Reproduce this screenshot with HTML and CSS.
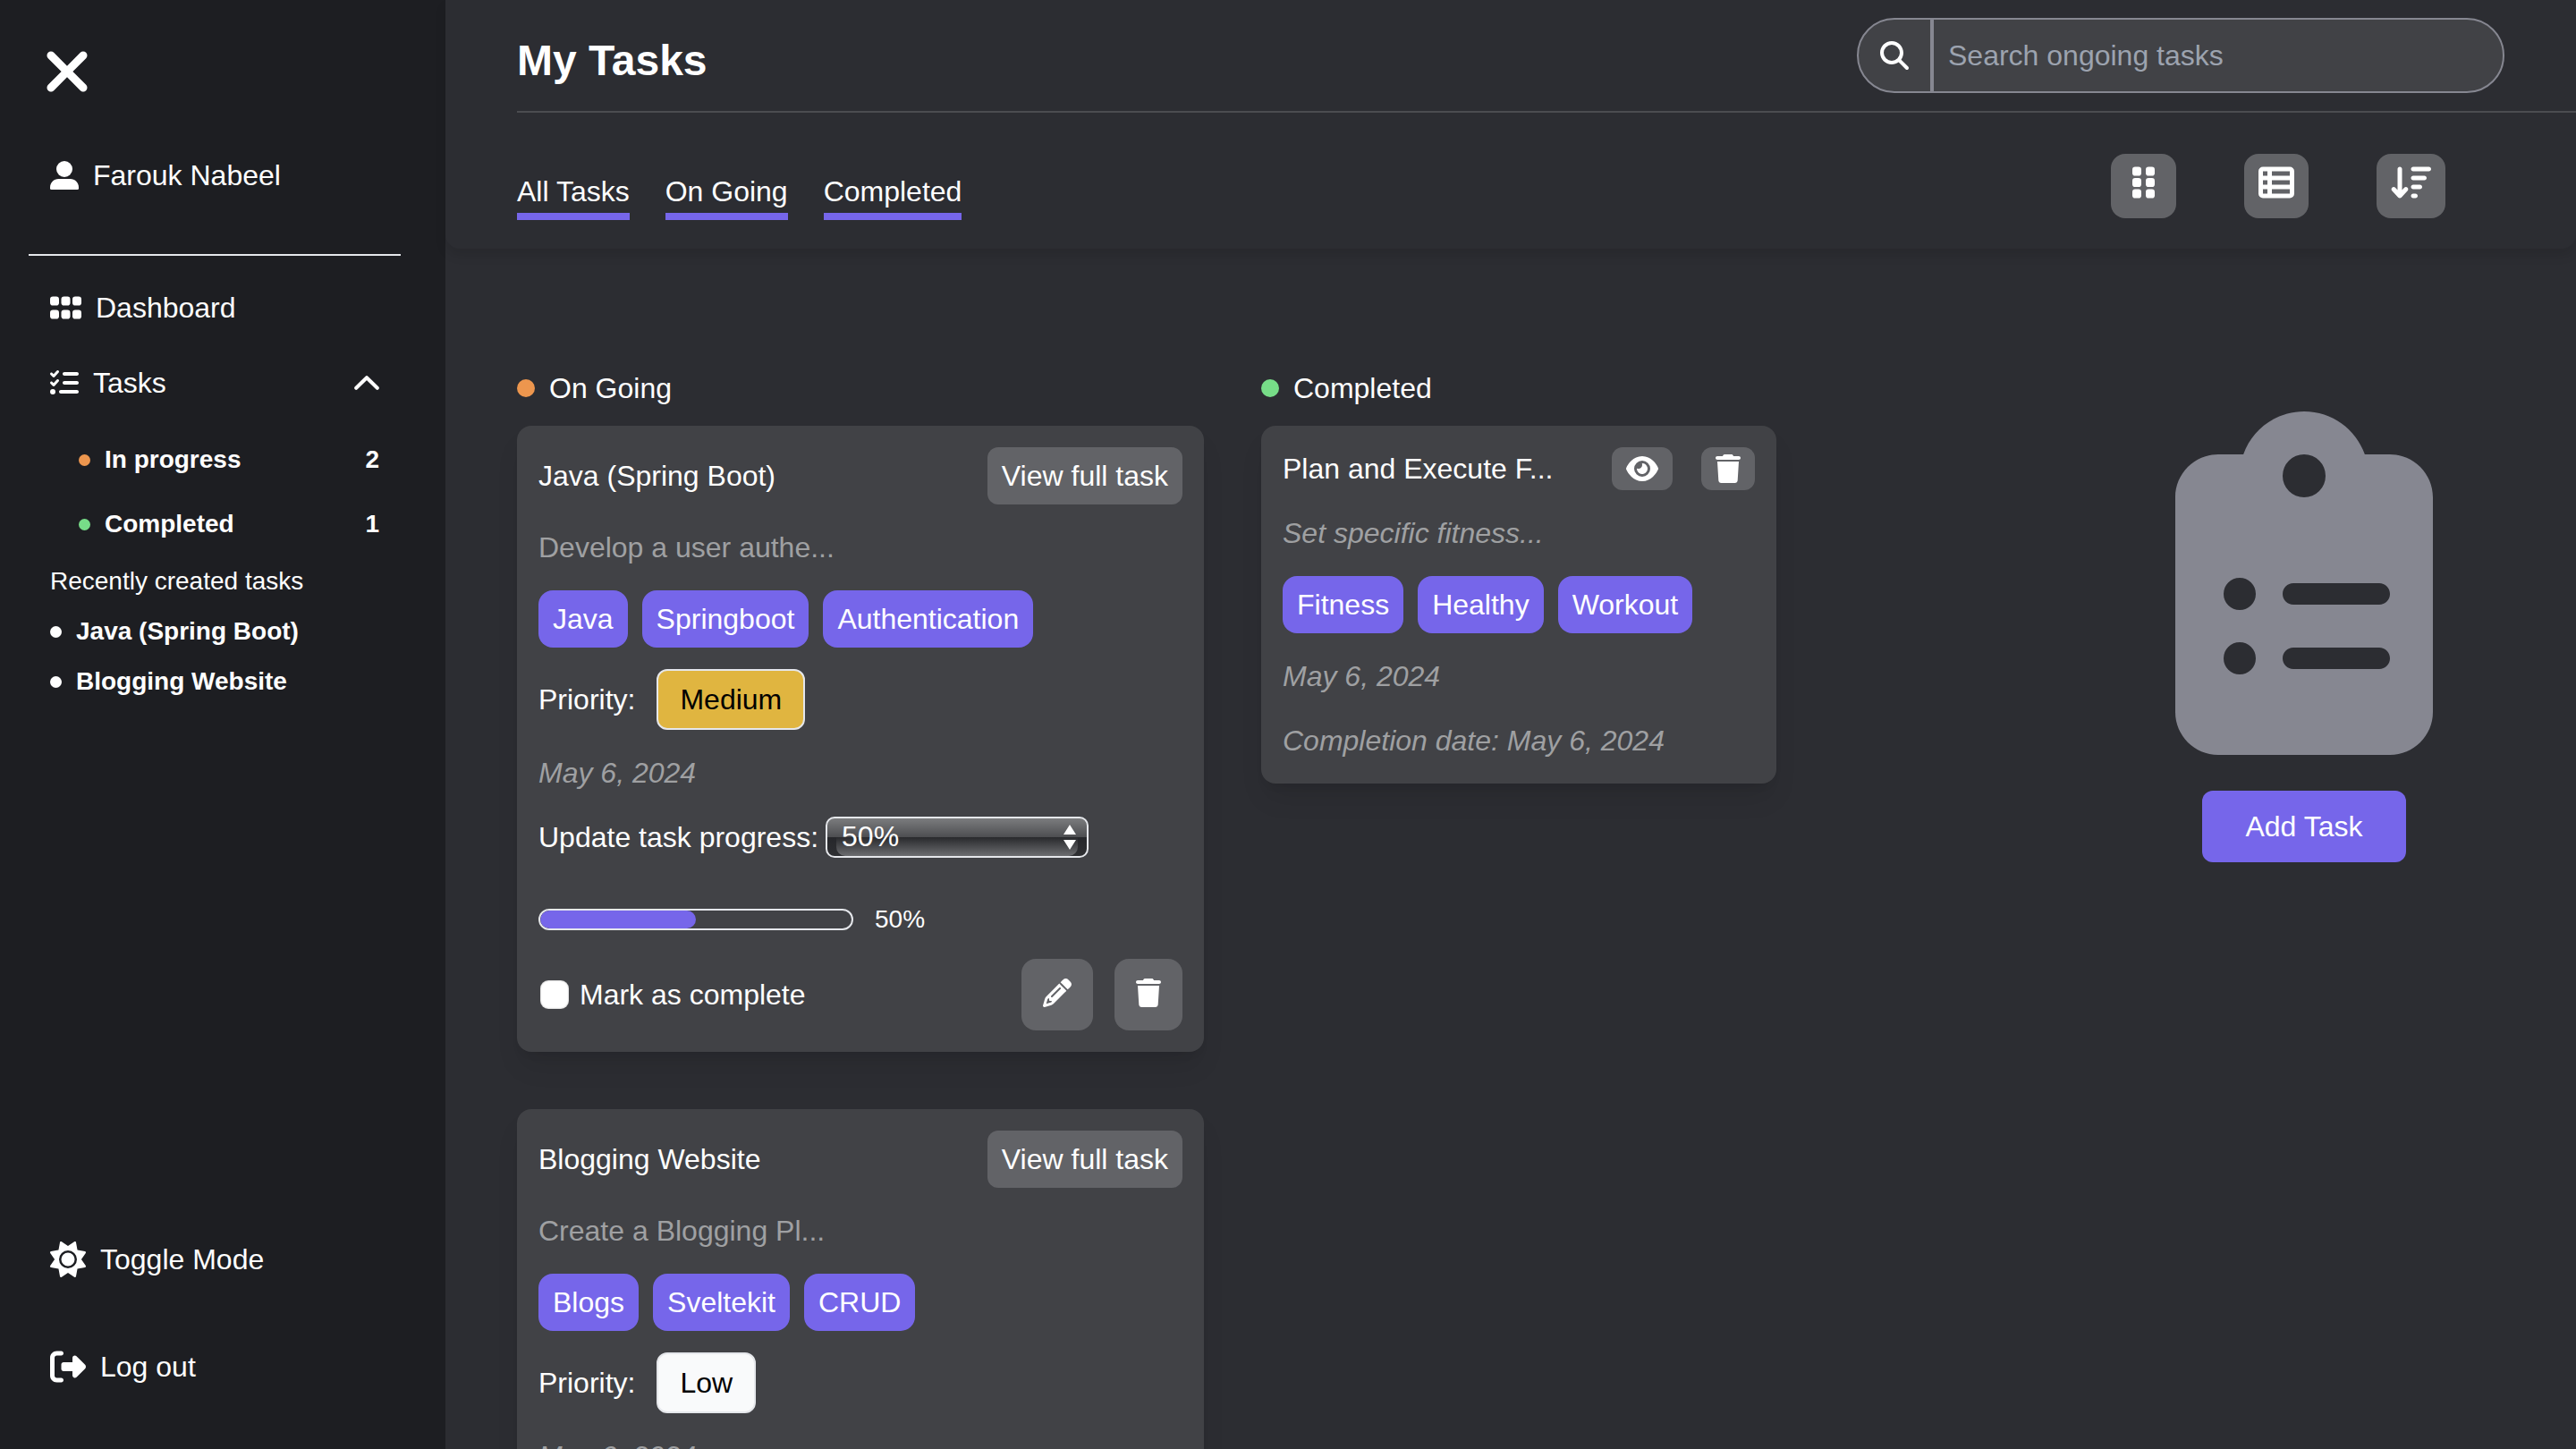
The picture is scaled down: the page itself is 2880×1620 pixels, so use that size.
FILE: index.html
```html
<!DOCTYPE html>
<html lang="en">
<head>
<meta charset="utf-8">
<meta name="viewport" content="width=device-width, initial-scale=1">
<title>My Tasks</title>
<link rel="stylesheet" href="styles.css">
</head>
<body>
<svg class="sprite" aria-hidden="true">
  <symbol id="trash" viewBox="0 0 448 512"><path d="M135.2 17.7L128 32H32C14.3 32 0 46.3 0 64S14.3 96 32 96H416c17.7 0 32-14.3 32-32s-14.3-32-32-32H320l-7.2-14.3C307.4 6.8 296.3 0 284.2 0H163.8c-12.1 0-23.2 6.8-28.6 17.7zM416 128H32L53.2 467c1.6 25.3 22.6 45 47.9 45H346.9c25.3 0 46.3-19.7 47.9-45L416 128z"/></symbol>
  <symbol id="pencil" viewBox="0 0 512 512"><path d="M410.3 231l11.3-11.3-33.9-33.9-62.1-62.1L291.7 89.8l-11.3 11.3-22.6 22.6L58.6 322.9c-10.4 10.4-18 23.3-22.2 37.4L1 480.7c-2.5 8.4-.2 17.5 6.1 23.7s15.3 8.5 23.7 6.1l120.3-35.4c14.1-4.2 27-11.8 37.4-22.2L387.7 253.7 410.3 231zM160 399.4l-9.1 22.7c-4 3.1-8.5 5.4-13.3 6.9L59.4 452l23-78.1c1.4-4.9 3.8-9.4 6.9-13.3l22.7-9.1v32c0 8.8 7.2 16 16 16h32zM362.7 18.7L348.3 33.2 325.7 55.8 314.3 67.1l33.9 33.9 62.1 62.1 33.9 33.9 11.3-11.3 22.6-22.6 14.5-14.5c25-25 25-65.5 0-90.5L453.3 18.7c-25-25-65.5-25-90.5 0zm-47.4 168l-144 144c-6.2 6.2-16.4 6.2-22.6 0s-6.2-16.4 0-22.6l144-144c6.2-6.2 16.4-6.2 22.6 0s6.2 16.4 0 22.6z"/></symbol>
</svg>
<div class="app">
  <nav class="sidebar">
    <button class="close" type="button" aria-label="Close menu">
      <svg width="54" height="72" viewBox="0 0 384 512"><path d="M342.6 150.6c12.5-12.5 12.5-32.8 0-45.3s-32.8-12.5-45.3 0L192 210.7 86.6 105.4c-12.5-12.5-32.8-12.5-45.3 0s-12.5 32.8 0 45.3L146.7 256 41.4 361.4c-12.5 12.5-12.5 32.8 0 45.3s32.8 12.5 45.3 0L192 301.3 297.4 406.6c12.5 12.5 32.8 12.5 45.3 0s12.5-32.8 0-45.3L237.3 256 342.6 150.6z"/></svg>
    </button>
    <a class="nav-item profile" href="#profile">
      <svg width="32" height="32" viewBox="0 0 32 32"><circle cx="16" cy="9" r="9"/><path d="M0 29.500C0 24.200 4.200 20 9.500 20h13C27.800 20 32 24.200 32 29.500V30.500A1.500 1.500 0 0 1 30.500 32H1.500A1.500 1.500 0 0 1 0 30.500z"/></svg>
      Farouk Nabeel
    </a>
    <hr class="rule">
    <a class="nav-item" href="#dashboard">
      <svg width="35" height="40" viewBox="0 0 448 512"><rect y="96" width="128" height="128" rx="40"/><rect x="160" y="96" width="128" height="128" rx="40"/><rect x="320" y="96" width="128" height="128" rx="40"/><rect y="288" width="128" height="128" rx="40"/><rect x="160" y="288" width="128" height="128" rx="40"/><rect x="320" y="288" width="128" height="128" rx="40"/></svg>
      Dashboard
    </a>
    <button class="nav-item tasks-toggle" type="button" aria-expanded="true">
      <svg width="32" height="32" viewBox="0 0 512 512"><path d="M152.1 38.2c9.900 8.900 10.700 24 1.800 33.900l-72 80c-4.400 4.900-10.600 7.800-17.200 7.900s-12.900-2.400-17.600-7L7 113C-2.300 103.600-2.300 88.400 7 79s24.600-9.400 33.900 0l22.100 22.100 55.100-61.200c8.900-9.900 24-10.700 33.900-1.800zm0 160c9.900 8.900 10.700 24 1.800 33.900l-72 80c-4.400 4.900-10.600 7.800-17.200 7.900s-12.900-2.400-17.600-7L7 273c-9.400-9.400-9.400-24.600 0-33.900s24.600-9.400 33.900 0l22.100 22.100 55.100-61.200c8.900-9.900 24-10.700 33.900-1.800zM224 96c0-17.700 14.300-32 32-32H480c17.700 0 32 14.300 32 32s-14.300 32-32 32H256c-17.700 0-32-14.300-32-32zm0 160c0-17.700 14.300-32 32-32H480c17.700 0 32 14.300 32 32s-14.300 32-32 32H256c-17.700 0-32-14.300-32-32zM160 416c0-17.700 14.300-32 32-32H480c17.700 0 32 14.300 32 32s-14.300 32-32 32H192c-17.700 0-32-14.300-32-32zM48 368a48 48 0 1 1 0 96 48 48 0 1 1 0-96z"/></svg>
      Tasks
      <svg class="chevron" width="28" height="16" viewBox="0 0 28 16"><path d="M2.200 13.800 14 2.200 25.800 13.800"/></svg>
    </button>
    <ul class="counts">
      <li><i class="dot dot-small orange"></i>In progress<span class="count">2</span></li>
      <li><i class="dot dot-small green"></i>Completed<span class="count">1</span></li>
    </ul>
    <p class="recent-title">Recently created tasks</p>
    <ul class="recent">
      <li><i class="dot dot-small white"></i>Java (Spring Boot)</li>
      <li><i class="dot dot-small white"></i>Blogging Website</li>
    </ul>
    <div class="sidebar-foot">
      <button class="nav-item foot-item" type="button">
        <svg width="40" height="40" viewBox="0 0 512 512"><path d="M361.5 1.2c5 2.1 8.6 6.6 9.6 11.9L391 121l107.9 19.800c5.300 1 9.800 4.600 11.900 9.600s1.500 10.700-1.600 15.200L446.900 256l62.300 90.300c3.100 4.500 3.700 10.200 1.600 15.200s-6.600 8.600-11.900 9.600L391 391 371.100 498.900c-1 5.300-4.600 9.800-9.600 11.900s-10.700 1.500-15.200-1.600L256 446.900l-90.300 62.300c-4.500 3.100-10.200 3.700-15.200 1.600s-8.600-6.600-9.600-11.900L121 391 13.100 371.100c-5.300-1-9.800-4.600-11.900-9.600s-1.500-10.700 1.600-15.200L65.100 256 2.800 165.700c-3.100-4.500-3.700-10.200-1.600-15.200s6.600-8.600 11.900-9.600L121 121 140.900 13.100c1-5.300 4.600-9.800 9.600-11.900s10.700-1.500 15.200 1.600L256 65.100 346.300 2.800c4.500-3.100 10.200-3.700 15.200-1.600zM160 256a96 96 0 1 1 192 0 96 96 0 1 1 -192 0zm224 0a128 128 0 1 0 -256 0 128 128 0 1 0 256 0z"/></svg>
        Toggle Mode
      </button>
      <button class="nav-item foot-item" type="button">
        <svg width="40" height="40" viewBox="0 0 512 512"><path d="M377.9 105.9L500.7 228.7c7.2 7.2 11.3 17.1 11.3 27.3s-4.100 20.100-11.300 27.300L377.900 406.100c-6.400 6.400-15 9.900-24 9.900c-18.700 0-33.900-15.200-33.900-33.900l0-62.100-128 0c-17.700 0-32-14.300-32-32l0-64c0-17.700 14.300-32 32-32l128 0 0-62.100c0-18.700 15.200-33.900 33.900-33.900c9 0 17.600 3.600 24 9.900zM160 96L96 96c-17.700 0-32 14.300-32 32l0 256c0 17.700 14.300 32 32 32l64 0c17.700 0 32 14.300 32 32s-14.300 32-32 32l-64 0c-53 0-96-43-96-96L0 128C0 75 43 32 96 32l64 0c17.700 0 32 14.300 32 32s-14.300 32-32 32z"/></svg>
        Log out
      </button>
    </div>
  </nav>

  <main class="main">
    <header class="header">
      <div class="title-row">
        <h1 class="title">My Tasks</h1>
        <form class="search" role="search">
          <button class="search-btn" type="button" aria-label="Search">
            <svg width="32" height="32" viewBox="0 0 512 512"><path d="M416 208c0 45.900-14.900 88.300-40 122.700L502.600 457.400c12.500 12.500 12.500 32.800 0 45.300s-32.800 12.500-45.300 0L330.700 376c-34.400 25.200-76.800 40-122.700 40C93.100 416 0 322.900 0 208S93.100 0 208 0S416 93.100 416 208zM208 352a144 144 0 1 0 0-288 144 144 0 1 0 0 288z"/></svg>
          </button>
          <input class="search-input" type="text" placeholder="Search ongoing tasks" aria-label="Search ongoing tasks">
        </form>
      </div>
      <div class="tab-row">
        <div class="tabs">
          <a class="tab" href="#all">All Tasks</a>
          <a class="tab" href="#ongoing">On Going</a>
          <a class="tab" href="#completed">Completed</a>
        </div>
        <div class="tools">
          <button class="tool tool-wide" type="button" aria-label="Grid view">
            <svg width="25" height="40" viewBox="0 0 320 512"><rect y="32" width="128" height="128" rx="40"/><rect x="192" y="32" width="128" height="128" rx="40"/><rect y="192" width="128" height="128" rx="40"/><rect x="192" y="192" width="128" height="128" rx="40"/><rect y="352" width="128" height="128" rx="40"/><rect x="192" y="352" width="128" height="128" rx="40"/></svg>
          </button>
          <button class="tool" type="button" aria-label="List view">
            <svg width="40" height="40" viewBox="0 0 512 512"><path fill-rule="evenodd" d="M64 32H448a64 64 0 0 1 64 64V416a64 64 0 0 1-64 64H64a64 64 0 0 1-64-64V96a64 64 0 0 1 64-64zM64 96v64h64V96zM192 96v64h256V96zM64 224v64h64v-64zM192 224v64h256v-64zM64 352v64h64v-64zM192 352v64h256v-64z"/></svg>
          </button>
          <button class="tool" type="button" aria-label="Sort">
            <svg width="45" height="40" viewBox="0 0 576 512"><path d="M151.600 469.600C145.500 476.200 137 480 128 480s-17.500-3.800-23.600-10.400l-88-96c-11.900-13-11.100-33.300 2-45.200s33.300-11.100 45.200 2L96 365.700V64c0-17.700 14.300-32 32-32s32 14.300 32 32V365.700l32.400-35.400c11.900-13 32.200-13.900 45.200-2s13.900 32.200 2 45.200l-88 96zM320 480c-17.700 0-32-14.300-32-32s14.300-32 32-32h32c17.700 0 32 14.300 32 32s-14.300 32-32 32H320zm0-128c-17.700 0-32-14.300-32-32s14.300-32 32-32h96c17.700 0 32 14.300 32 32s-14.300 32-32 32H320zm0-128c-17.700 0-32-14.300-32-32s14.300-32 32-32H480c17.700 0 32 14.300 32 32s-14.300 32-32 32H320zm0-128c-17.700 0-32-14.300-32-32s14.300-32 32-32H544c17.700 0 32 14.300 32 32s-14.300 32-32 32H320z"/></svg>
          </button>
        </div>
      </div>
    </header>

    <div class="board">
      <section class="column column-ongoing">
        <h2 class="column-title"><i class="dot orange"></i>On Going</h2>
        <div class="cards">
          <article class="card">
            <div class="card-head">
              <h3 class="card-title">Java (Spring Boot)</h3>
              <button class="view-btn" type="button">View full task</button>
            </div>
            <p class="muted">Develop a user authe...</p>
            <ul class="tags"><li>Java</li><li>Springboot</li><li>Authentication</li></ul>
            <div class="priority">Priority: <span class="badge medium">Medium</span></div>
            <p class="muted italic">May 6, 2024</p>
            <div class="update">
              <label for="progress-java">Update task progress:</label>
              <div class="select-wrap">
                <select id="progress-java" class="select"><option>25%</option><option selected>50%</option><option>75%</option><option>100%</option></select>
                <svg class="arrows" width="14" height="28" viewBox="0 0 14 28"><path d="M7 0l7 11H0zM7 28L0 17h14z"/></svg>
              </div>
            </div>
            <div class="progress">
              <div class="bar"><div class="fill" style="width: 50%"></div></div>
              <span>50%</span>
            </div>
            <div class="card-foot">
              <label class="mark"><input class="check" type="checkbox">Mark as complete</label>
              <button class="icon-btn" type="button" aria-label="Edit task"><svg width="32" height="32"><use href="#pencil"/></svg></button>
              <button class="icon-btn" type="button" aria-label="Delete task"><svg width="28" height="32"><use href="#trash"/></svg></button>
            </div>
          </article>

          <article class="card">
            <div class="card-head">
              <h3 class="card-title">Blogging Website</h3>
              <button class="view-btn" type="button">View full task</button>
            </div>
            <p class="muted">Create a Blogging Pl...</p>
            <ul class="tags"><li>Blogs</li><li>Sveltekit</li><li>CRUD</li></ul>
            <div class="priority">Priority: <span class="badge low">Low</span></div>
            <p class="muted italic">May 6, 2024</p>
          </article>
        </div>
      </section>

      <section class="column column-completed">
        <h2 class="column-title"><i class="dot green"></i>Completed</h2>
        <div class="cards">
          <article class="card">
            <div class="card-head">
              <h3 class="card-title">Plan and Execute F...</h3>
              <div class="card-actions">
                <button class="icon-btn small" type="button" aria-label="View task"><svg width="36" height="32" viewBox="0 0 576 512"><path d="M288 32c-80.800 0-145.500 36.800-192.600 80.600C48.600 156 17.300 208 2.500 243.700c-3.300 7.900-3.300 16.700 0 24.600C17.300 304 48.600 356 95.400 399.400C142.500 443.200 207.200 480 288 480s145.500-36.800 192.600-80.600c46.800-43.500 78.100-95.400 93-131.100c3.300-7.900 3.300-16.700 0-24.600c-14.900-35.700-46.200-87.700-93-131.100C433.500 68.800 368.800 32 288 32zM144 256a144 144 0 1 1 288 0 144 144 0 1 1 -288 0zm144-64c0 35.300-28.700 64-64 64c-7.100 0-13.900-1.200-20.300-3.300c-5.500-1.800-11.900 1.600-11.700 7.400c.3 6.900 1.300 13.800 3.200 20.700c13.700 51.200 66.400 81.600 117.600 67.900s81.600-66.400 67.900-117.600c-11.100-41.500-47.800-69.400-88.600-71.100c-5.800-.2-9.200 6.100-7.400 11.700c2.100 6.400 3.300 13.200 3.300 20.300z"/></svg></button>
                <button class="icon-btn small" type="button" aria-label="Delete task"><svg width="28" height="32"><use href="#trash"/></svg></button>
              </div>
            </div>
            <p class="muted italic">Set specific fitness...</p>
            <ul class="tags"><li>Fitness</li><li>Healthy</li><li>Workout</li></ul>
            <p class="muted italic">May 6, 2024</p>
            <p class="muted italic">Completion date: May 6, 2024</p>
          </article>
        </div>
      </section>

      <aside class="add">
        <svg width="288" height="384" viewBox="0 0 384 512"><path d="M192 0c-41.800 0-77.400 26.700-90.500 64H64C28.700 64 0 92.700 0 128V448c0 35.300 28.700 64 64 64H320c35.300 0 64-28.700 64-64V128c0-35.300-28.700-64-64-64H282.500C269.400 26.700 233.800 0 192 0zm0 64a32 32 0 1 1 0 64 32 32 0 1 1 0-64zM72 272a24 24 0 1 1 48 0 24 24 0 1 1 -48 0zm104-16H304c8.800 0 16 7.200 16 16s-7.200 16-16 16H176c-8.800 0-16-7.200-16-16s7.200-16 16-16zM72 368a24 24 0 1 1 48 0 24 24 0 1 1 -48 0zm88 0c0-8.800 7.200-16 16-16H304c8.800 0 16 7.200 16 16s-7.200 16-16 16H176c-8.800 0-16-7.200-16-16z"/></svg>
        <button class="add-btn" type="button">Add Task</button>
      </aside>
    </div>
  </main>
</div>
</body>
</html>
```
FILE: styles.css
```css
:root {
  --bg: #2c2d32;
  --side: #1d1e22;
  --card: #414246;
  --button: #626367;
  --accent: #7666ea;
  --light: #e5e7eb;
  --muted: #9fa0a2;
}

* { box-sizing: border-box; }

body {
  margin: 0;
  background: var(--bg);
  color: #fff;
  font: 32px/48px "Liberation Sans", Arial, sans-serif;
}

h1, h2, h3, p, ul { margin: 0; padding: 0; font-weight: 400; font-size: inherit; }
ul { list-style: none; }
a { color: inherit; text-decoration: none; }
svg { display: block; flex: none; fill: currentColor; }
button, input, select { margin: 0; border: 0; color: inherit; font: inherit; background: none; }
button { padding: 0; cursor: pointer; }

.sprite { position: absolute; width: 0; height: 0; }

.app { display: grid; grid-template-columns: 498px minmax(0, 1fr); height: 100vh; }

/* Sidebar */
.sidebar {
  display: flex;
  flex-direction: column;
  padding: 44px 50px 68px 32px;
  background: var(--side);
}
.close { align-self: flex-start; margin-left: 16px; }
.nav-item { display: flex; align-items: center; gap: 16px; padding: 0 24px; text-align: left; }
.profile { margin-top: 56px; }
.rule { width: 100%; height: 2px; margin: 64px 0 34px; border: 0; background: var(--light); }
.tasks-toggle { margin-top: 36px; }
.chevron { margin-left: auto; fill: none; stroke: currentColor; stroke-width: 4; stroke-linecap: round; stroke-linejoin: round; }
.counts, .recent { font-size: 28px; line-height: 40px; font-weight: 700; }
.counts { display: grid; gap: 32px; padding: 42px 24px 0 56px; }
.counts li, .recent li { display: flex; align-items: center; gap: 16px; }
.count { margin-left: auto; }
.recent-title { padding: 24px 24px 0; font-size: 28px; line-height: 40px; }
.recent { display: grid; gap: 16px; padding: 16px 24px 0; }
.sidebar-foot { display: grid; gap: 72px; margin-top: auto; }

.dot { flex: none; width: 20px; height: 20px; border-radius: 50%; }
.dot-small { width: 13px; height: 13px; }
.orange { background: #ed964e; }
.green { background: #77dd88; }
.white { background: #fff; }

/* Header */
.main { display: flex; flex-direction: column; min-width: 0; min-height: 0; }
.header { flex: none; border-radius: 0 0 16px 16px; box-shadow: 0 8px 12px rgba(0, 0, 0, .1); }
.title-row {
  display: flex;
  align-items: flex-end;
  justify-content: space-between;
  margin-left: 80px;
  padding: 20px 80px 20px 0;
  border-bottom: 2px solid #4b4c50;
}
.title { font-size: 48px; line-height: 72px; font-weight: 700; }
.search {
  display: flex;
  width: 724px;
  height: 84px;
  border: 2px solid #868791;
  border-radius: 42px;
  background: var(--card);
  overflow: hidden;
}
.search-btn { padding: 0 24px; border-right: 4px solid #868791; }
.search-input { flex: 1; min-width: 0; padding: 0 16px; outline: 0; }
.search-input::placeholder { color: #9ca3af; opacity: 1; }
.tab-row { display: flex; align-items: flex-start; justify-content: space-between; padding: 46px 146px 32px 80px; }
.tabs { display: flex; gap: 40px; padding-top: 18px; }
.tab { border-bottom: 8px solid var(--accent); }
.tools { display: flex; gap: 76px; }
.tool { padding: 12px 16px 20px; border-radius: 16px; background: var(--button); }
.tool-wide { padding-inline: 24px; }

/* Board */
.board {
  flex: 1;
  display: flex;
  align-items: flex-start;
  gap: 64px;
  min-height: 0;
  padding: 132px 160px 0 80px;
  overflow-y: auto;
  scrollbar-width: none;
}
.column { display: grid; gap: 18px; }
.column-ongoing { width: 768px; }
.column-completed { width: 576px; }
.column-title { display: flex; align-items: center; gap: 16px; }
.cards { display: grid; gap: 64px; }
.card {
  display: grid;
  gap: 24px;
  padding: 24px;
  border-radius: 16px;
  background: var(--card);
  box-shadow: 0 20px 30px -6px rgba(0, 0, 0, .1), 0 8px 12px -8px rgba(0, 0, 0, .1);
}
.card-head { display: flex; align-items: center; justify-content: space-between; }
.card-actions { display: flex; gap: 32px; }
.view-btn { padding: 8px 16px; border-radius: 12px; background: var(--button); }
.muted { color: var(--muted); }
.italic { font-style: italic; }
.tags { display: flex; gap: 16px; }
.tags li { padding: 8px 16px; border-radius: 16px; background: var(--accent); }
.priority { display: flex; align-items: center; gap: 24px; }
.badge { padding: 8px 24px; border: 2px solid var(--light); border-radius: 12px; color: #000; }
.medium { background: #e0b540; }
.low { background: #f9fafb; }

.update { display: flex; align-items: center; gap: 8px; }
.select-wrap {
  position: relative;
  width: 294px;
  height: 46px;
  border: 2px solid var(--light);
  border-radius: 10px;
  background: linear-gradient(#7b7c7e, #4d4e51 50%, #26272b 50%, #2e2f32);
  overflow: hidden;
}
.select-wrap::before {
  content: "";
  position: absolute;
  inset: 50% 10px 0;
  border-radius: 0 0 10px 10px;
  background: linear-gradient(#28292c, #6c6d70);
}
.select { position: relative; display: block; width: 100%; height: 40px; padding: 0 16px; appearance: none; line-height: 40px; }
.select option { color: #000; }
.arrows { position: absolute; top: 7px; right: 12px; pointer-events: none; }

.progress { display: flex; align-items: center; gap: 24px; margin-top: 24px; font-size: 28px; line-height: 40px; }
.bar { width: 352px; height: 24px; border: 2px solid var(--light); border-radius: 12px; overflow: hidden; }
.fill { height: 100%; border-radius: 10px; background: var(--accent); }

.card-foot { display: flex; align-items: center; gap: 24px; }
.mark { display: flex; align-items: center; gap: 12px; margin-right: auto; padding-left: 2px; }
.check { appearance: none; width: 32px; height: 32px; border-radius: 9px; background: #fff; box-shadow: inset 0 0 2px rgba(0, 0, 0, .4); }
.check:checked { background: var(--accent); }
.icon-btn { padding: 22px 24px 26px; border-radius: 16px; background: var(--button); }
.icon-btn.small { padding: 8px 16px; border-radius: 12px; }

.add { display: grid; justify-items: center; gap: 40px; margin-left: auto; padding-top: 50px; color: #868791; }
.add-btn { padding: 16px 48px; border-radius: 12px; background: var(--accent); color: #fff; }
```
